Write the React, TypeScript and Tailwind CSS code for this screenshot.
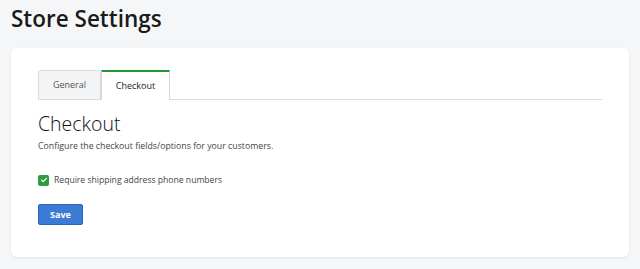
import React from 'react';

export default function App() {
  return (
    <div className="min-h-[269px] bg-[#f5f6f7] px-[11px] pt-[3px] pb-[13px]" style={{ fontFamily: '"Open Sans", sans-serif' }}>
      <h1 className="text-[22.5px] font-[560] leading-[32px] text-[#1a1a1a]">Store Settings</h1>
      <div className="mt-[13px] rounded-[6px] bg-white px-[27px] pt-[22px] pb-[32px] shadow-[0_1px_3px_rgba(0,0,0,0.08)]">
        <div className="flex border-b border-[#d9d9d9]">
          <button className="-mb-px h-[30px] w-[63px] rounded-t-[3px] border border-[#d9d9d9] bg-[#f3f4f5] text-[9px] text-[#555]">
            General
          </button>
          <button className="-mb-px h-[30px] w-[69px] border-x border-t-2 border-x-[#d9d9d9] border-t-[#1f9a36] bg-white text-[9px] text-[#222]">
            Checkout
          </button>
        </div>
        <h2 className="mt-[11px] text-[19.5px] font-light leading-[26px] text-[#111]">Checkout</h2>
        <p className="mt-[3px] text-[8.75px] leading-[12px] text-[#444]">
          Configure the checkout fields/options for your customers.
        </p>
        <label className="mt-[22px] flex items-center gap-[5px]">
          <span className="flex h-[11px] w-[11px] items-center justify-center rounded-[2px] bg-[#2f9d3f]">
            <svg viewBox="0 0 12 12" className="h-[8px] w-[8px]" fill="none" stroke="white" strokeWidth="2" strokeLinecap="round" strokeLinejoin="round">
              <path d="M2.5 6.2 5 8.5 9.5 3.5" />
            </svg>
          </span>
          <span className="text-[8.6px] leading-[12px] text-[#444]">Require shipping address phone numbers</span>
        </label>
        <button className="mt-[18px] h-[21px] w-[45px] rounded-[2px] border border-[#2a66c0] bg-[#3a7bd5] text-[9px] font-bold text-white">
          Save
        </button>
      </div>
    </div>
  );
}
